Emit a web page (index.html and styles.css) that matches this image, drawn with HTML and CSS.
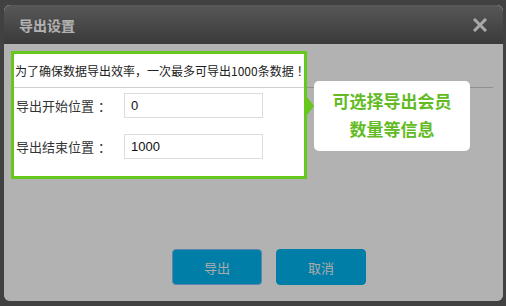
FILE: index.html
```html
<!DOCTYPE html>
<html lang="zh-CN">
<head>
<meta charset="utf-8">
<title>导出设置</title>
<link rel="stylesheet" href="styles.css">
</head>
<body>
<div class="modal">
  <div class="modal-header">
    <span class="modal-title">导出设置</span>
    <svg class="modal-close" width="14" height="14" viewBox="0 0 14 14"><path d="M2 2 L12 12 M12 2 L2 12" stroke="#f2f2f2" stroke-width="3" stroke-linecap="square"/></svg>
  </div>
  <div class="modal-body">
    <p class="notice">为了确保数据导出效率，一次最多可导出1000条数据<span class="excl">！</span></p>
    <div class="form-row">
      <label class="form-label">导出开始位置<span class="colon">：</span></label>
      <input class="form-input" type="text" value="0">
    </div>
    <div class="form-row second">
      <label class="form-label">导出结束位置<span class="colon">：</span></label>
      <input class="form-input" type="text" value="1000">
    </div>
  </div>
  <div class="modal-footer">
    <button class="btn focused">导出</button>
    <button class="btn">取消</button>
  </div>
  <div class="spotlight"></div>
  <div class="callout">可选择导出会员<br>数量等信息</div>
</div>
</body>
</html>
```
FILE: styles.css
```css
html, body {
  margin: 0;
  padding: 0;
}
body {
  width: 506px;
  height: 306px;
  background: #414141;
  padding: 5px 0 0 4px;
  box-sizing: border-box;
  font-family: "Noto Sans CJK SC", "Liberation Sans", sans-serif;
  overflow: hidden;
}
.modal {
  position: relative;
  width: 499px;
  height: 296px;
  background: #fff;
  border-radius: 6px;
  overflow: hidden;
  display: flex;
  flex-direction: column;
}
.modal-header {
  height: 39px;
  flex: none;
  background: linear-gradient(#7e7e7e, #535353);
  display: flex;
  align-items: center;
  justify-content: space-between;
  padding: 0 16px 0 15px;
}
.modal-title {
  color: #fff;
  font-size: 14px;
  font-weight: bold;
  line-height: 16px;
}
.modal-close {
  display: block;
  margin-top: 1px;
}
.modal-body {
  flex: 1;
  padding: 10px 10px 0;
}
.notice {
  margin: 0;
  padding-left: 1px;
  height: 33px;
  line-height: 33px;
  font-size: 12px;
  color: #222;
  border-bottom: 1px solid #cfcfcf;
  white-space: nowrap;
}
.excl {
  padding-left: 3px;
}
.form-row {
  display: flex;
  align-items: center;
  margin-top: 5px;
  height: 25px;
}
.form-row.second {
  margin-top: 16px;
}
.form-label {
  width: 110px;
  padding-left: 2px;
  box-sizing: border-box;
  font-size: 13px;
  color: #333;
  white-space: nowrap;
}
.colon {
  padding-left: 4px;
}
.form-input {
  width: 139px;
  height: 25px;
  box-sizing: border-box;
  border: 1px solid #dcdcdc;
  padding: 0 6px;
  margin: 0;
  font-family: "Liberation Sans", Arial, sans-serif;
  font-size: 13px;
  color: #111;
  outline: none;
}
.modal-footer {
  flex: none;
  display: flex;
  gap: 14px;
  padding: 0 0 16px 168px;
}
.btn {
  width: 90px;
  height: 36px;
  border: 1px solid #00b5f0;
  border-radius: 4px;
  background: #00b5f0;
  color: #f4f4f4;
  font-family: "Noto Sans CJK SC", sans-serif;
  font-size: 13px;
  padding: 0;
}
.btn.focused {
  border-color: #85bff8;
}
.spotlight {
  position: absolute;
  left: 7px;
  top: 46px;
  width: 296px;
  height: 128px;
  box-sizing: border-box;
  border: 3px solid #66c81a;
  box-shadow: 0 0 0 1200px rgba(0, 0, 0, 0.3);
  z-index: 1;
  pointer-events: none;
}
.callout {
  position: absolute;
  left: 310px;
  top: 76px;
  width: 156px;
  height: 70px;
  box-sizing: border-box;
  padding-top: 6px;
  background: #fff;
  border-radius: 5px;
  text-align: center;
  color: #62bb23;
  font-size: 17px;
  font-weight: bold;
  line-height: 28px;
  z-index: 2;
}
.callout::before {
  content: "";
  position: absolute;
  left: -7px;
  top: 16px;
  border-left: 7px solid #66c81a;
  border-top: 9px solid transparent;
  border-bottom: 9px solid transparent;
}
```
